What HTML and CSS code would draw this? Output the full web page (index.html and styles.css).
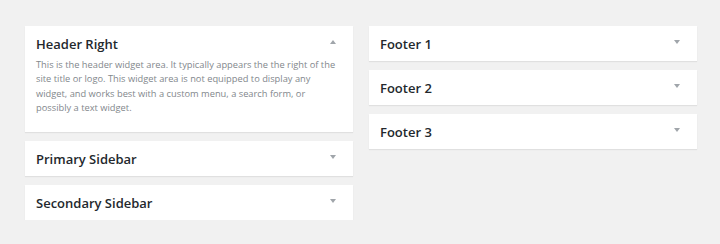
FILE: index.html
```html
<!DOCTYPE html>
<html lang="en">
<head>
<meta charset="UTF-8">
<title>Widgets</title>
<link rel="stylesheet" href="styles.css">
</head>
<body>

    <div class="widget-areas">
        <!-- Left column -->
        <div class="widget-column">
            <div class="widget-area open">
                <div class="widget-area-head">
                    <h3>Header Right</h3>
                    <span class="toggle-arrow up"></span>
                </div>
                <p class="widget-area-desc">This is the header widget area. It typically appears the the right of the site title or logo. This widget area is not equipped to display any widget, and works best with a custom menu, a search form, or possibly a text widget.</p>
            </div>
            <div class="widget-area">
                <div class="widget-area-head">
                    <h3>Primary Sidebar</h3>
                    <span class="toggle-arrow"></span>
                </div>
            </div>
            <div class="widget-area">
                <div class="widget-area-head">
                    <h3>Secondary Sidebar</h3>
                    <span class="toggle-arrow"></span>
                </div>
            </div>
        </div>

        <!-- Right column -->
        <div class="widget-column">
            <div class="widget-area">
                <div class="widget-area-head">
                    <h3>Footer 1</h3>
                    <span class="toggle-arrow"></span>
                </div>
            </div>
            <div class="widget-area">
                <div class="widget-area-head">
                    <h3>Footer 2</h3>
                    <span class="toggle-arrow"></span>
                </div>
            </div>
            <div class="widget-area">
                <div class="widget-area-head">
                    <h3>Footer 3</h3>
                    <span class="toggle-arrow"></span>
                </div>
            </div>
        </div>
    </div>

</body>
</html>
```

FILE: styles.css
```css
body {
    background-color: #f1f1f1;
    color: #23282d;
    font-family: 'Open Sans', sans-serif;
    margin: 0;
    padding: 26px 0 0 25px;
}

.widget-areas {
    display: grid;
    grid-template-columns: 328px 328px;
    gap: 16px;
    align-items: start;
}

.widget-column {
    display: flex;
    flex-direction: column;
    gap: 9px;
}

.widget-area {
    background-color: #fff;
    box-shadow: 0 1px 1px rgba(0, 0, 0, 0.07);
}

.widget-area-head {
    display: flex;
    align-items: center;
    justify-content: space-between;
    height: 35px;
    padding: 0 17px 0 11px;
}

.widget-area-head h3 {
    margin: 0;
    font-size: 13px;
    font-weight: 600;
}

.toggle-arrow {
    width: 0;
    height: 0;
    margin-top: -4px;
    border-left: 3px solid transparent;
    border-right: 3px solid transparent;
    border-top: 4px solid #a0a5aa;
}

.toggle-arrow.up {
    border-top: none;
    border-bottom: 4px solid #a0a5aa;
}

.widget-area-desc {
    margin: -3px 0 0 0;
    padding: 0 11px 17px 11px;
    font-size: 9.3px;
    line-height: 14.3px;
    color: #82878c;
}
```
